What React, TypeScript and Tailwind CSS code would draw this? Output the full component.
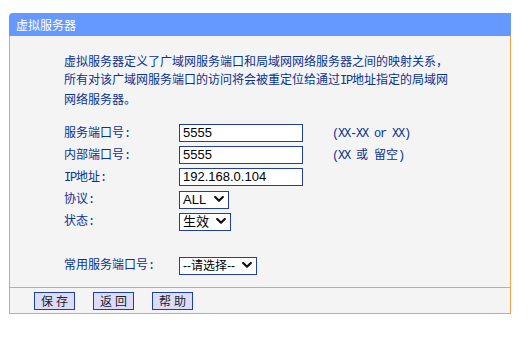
import React from "react";

const CJK = '"Noto Sans CJK SC", "Noto Sans", sans-serif';
const MONO = '"Liberation Mono", "DejaVu Sans Mono", monospace';
const ARIAL = '"Liberation Sans", Arial, "Noto Sans CJK SC", sans-serif';

function Mono({ children }: { children: React.ReactNode }) {
  return (
    <span className="tracking-[-1.2px]" style={{ fontFamily: MONO }}>
      {children}
    </span>
  );
}

function Chevron() {
  return (
    <svg width="10" height="7" viewBox="0 0 10 7" className="pointer-events-none absolute top-1/2 -translate-y-1/2 right-[5px]">
      <path d="M1.2 1.5 L5 5.2 L8.8 1.5" fill="none" stroke="#111" strokeWidth="2.2" strokeLinecap="round" strokeLinejoin="round" />
    </svg>
  );
}

function Select({ value, width, small }: { value: string; width: string; small?: boolean }) {
  return (
    <div className={`relative h-[18px] ${width}`}>
      <select
        defaultValue={value}
        className={`appearance-none w-full h-full border border-[#1f3fa6] bg-white ${small ? "text-[12px]" : "text-[13px]"} leading-[16px] text-black pl-[3px] outline-none`}
        style={{ fontFamily: ARIAL }}
      >
        <option>{value}</option>
      </select>
      <Chevron />
    </div>
  );
}

function Input({ value }: { value: string }) {
  return (
    <input
      defaultValue={value}
      className="w-[124px] h-[18px] border border-[#1f3fa6] bg-white text-[13px] text-black pl-[3px] outline-none"
      style={{ fontFamily: ARIAL }}
    />
  );
}

function Row({ label, children }: { label: React.ReactNode; children?: React.ReactNode }) {
  return (
    <div className="flex items-center h-[18px]">
      <div className="w-[115px] shrink-0">{label}</div>
      {children}
    </div>
  );
}

function Btn({ text }: { text: string }) {
  return (
    <button className="w-[41px] h-[18px] border border-[#1f3fa6] bg-[#dcdcfa] text-[12px] leading-[16px] text-[#222] tracking-[3px] pl-[3px]">
      {text}
    </button>
  );
}

export default function App() {
  return (
    <div className="w-[530px] h-[339px] bg-white pt-[13px] pl-[9px] text-[#0a3290]" style={{ fontFamily: CJK }}>
      <div className="w-[502px]">
        <div className="h-[23px] bg-[#6699ff] rounded-tl-[4px] text-white text-[12px] leading-[23px] pl-[7px]">
          虚拟服务器
        </div>
        <div className="border-x border-b border-[#f5a14b] bg-[#f4f4f4]">
          <div className="pt-[16px] pl-[54px] pb-[13px] text-[12px]">
            <p className="leading-[18px]">
              虚拟服务器定义了广域网服务端口和局域网网络服务器之间的映射关系，
              <br />
              所有对该广域网服务端口的访问将会被重定位给通过<Mono>IP</Mono>地址指定的局域网
              <br />
              网络服务器。
            </p>
            <div className="mt-[16px] flex flex-col gap-[4px]">
              <Row label={<>服务端口号<Mono>:</Mono></>}>
                <Input value="5555" />
                <span className="ml-[29px]">
                  <Mono>(XX-XX or XX)</Mono>
                </span>
              </Row>
              <Row label={<>内部端口号<Mono>:</Mono></>}>
                <Input value="5555" />
                <span className="ml-[29px] whitespace-pre">
                  <Mono>(XX </Mono>或<Mono> </Mono>留空<Mono>)</Mono>
                </span>
              </Row>
              <Row label={<><Mono>IP</Mono>地址<Mono>:</Mono></>}>
                <Input value="192.168.0.104" />
              </Row>
              <Row label={<>协议<Mono>:</Mono></>}>
                <Select value="ALL" width="w-[50px]" />
              </Row>
              <Row label={<>状态<Mono>:</Mono></>}>
                <Select value="生效" width="w-[52px]" />
              </Row>
              <Row label="" />
              <Row label={<>常用服务端口号<Mono>:</Mono></>}>
                <Select value="--请选择--" width="w-[78px]" small />
              </Row>
            </div>
          </div>
          <div className="border-t border-[#f5a14b] h-[26px] flex items-center gap-[18px] pl-[24px]">
            <Btn text="保存" />
            <Btn text="返回" />
            <Btn text="帮助" />
          </div>
        </div>
      </div>
    </div>
  );
}
